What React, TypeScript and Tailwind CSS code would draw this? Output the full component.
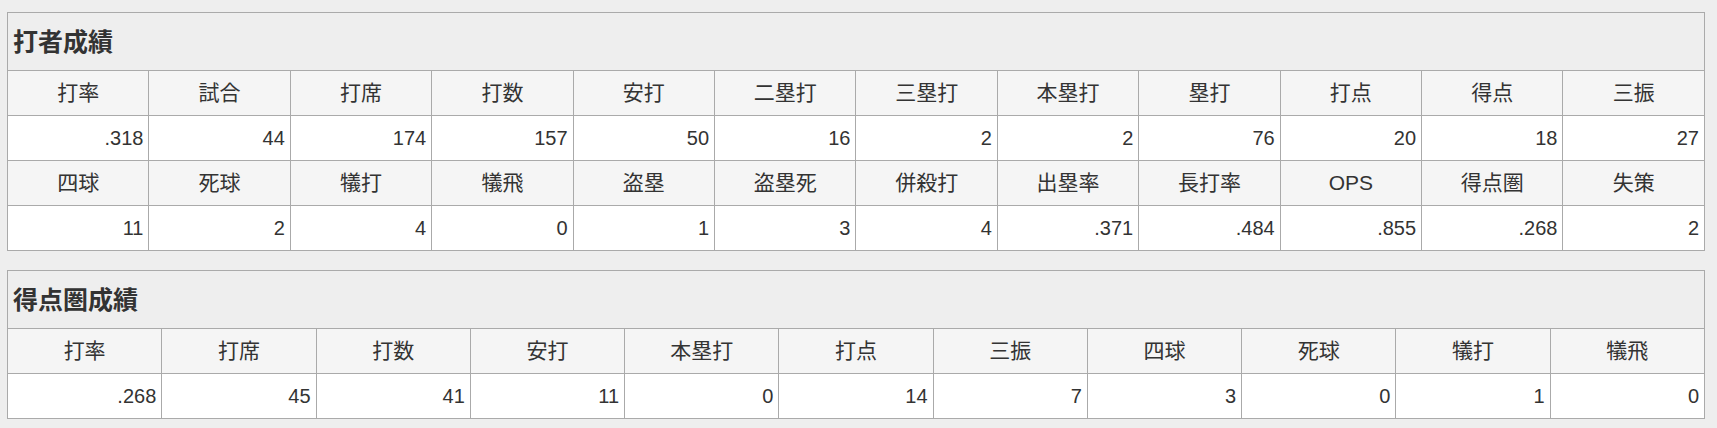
const batting = [
  [
    ['打率', '.318'],
    ['試合', '44'],
    ['打席', '174'],
    ['打数', '157'],
    ['安打', '50'],
    ['二塁打', '16'],
    ['三塁打', '2'],
    ['本塁打', '2'],
    ['塁打', '76'],
    ['打点', '20'],
    ['得点', '18'],
    ['三振', '27'],
  ],
  [
    ['四球', '11'],
    ['死球', '2'],
    ['犠打', '4'],
    ['犠飛', '0'],
    ['盗塁', '1'],
    ['盗塁死', '3'],
    ['併殺打', '4'],
    ['出塁率', '.371'],
    ['長打率', '.484'],
    ['OPS', '.855'],
    ['得点圏', '.268'],
    ['失策', '2'],
  ],
];

const scoring = [
  [
    ['打率', '.268'],
    ['打席', '45'],
    ['打数', '41'],
    ['安打', '11'],
    ['本塁打', '0'],
    ['打点', '14'],
    ['三振', '7'],
    ['四球', '3'],
    ['死球', '0'],
    ['犠打', '1'],
    ['犠飛', '0'],
  ],
];

function StatsTable({ title, rows }: { title: string; rows: string[][][] }) {
  const cols = rows[0].length;
  return (
    <table className="w-full table-fixed border-collapse border border-[#aaaaaa]">
      <thead>
        <tr>
          <th
            colSpan={cols}
            className="h-[58px] bg-[#eeeeee] px-[5px] pt-[2px] text-left text-[25px] font-bold text-[#333333]"
          >
            {title}
          </th>
        </tr>
      </thead>
      <tbody>
        {rows.map((row, i) => (
          <>
            <tr key={`h${i}`}>
              {row.map(([label]) => (
                <th
                  key={label}
                  className="h-[45px] border border-[#aaaaaa] bg-[#f5f5f5] text-center text-[21px] font-normal text-[#333333]"
                >
                  {label}
                </th>
              ))}
            </tr>
            <tr key={`d${i}`}>
              {row.map(([label, value]) => (
                <td
                  key={label}
                  className="h-[45px] border border-[#aaaaaa] bg-white px-[5px] text-right text-[20px] text-[#333333]"
                >
                  {value}
                </td>
              ))}
            </tr>
          </>
        ))}
      </tbody>
    </table>
  );
}

export default function App() {
  return (
    <div
      className="min-h-[428px] bg-[#eeeeee] pl-[7px] pr-[12px] pt-[12px]"
      style={{ fontFamily: '"Liberation Sans", "Noto Sans CJK JP", sans-serif' }}
    >
      <div className="flex flex-col gap-[19px]">
        <StatsTable title="打者成績" rows={batting} />
        <StatsTable title="得点圏成績" rows={scoring} />
      </div>
    </div>
  );
}
